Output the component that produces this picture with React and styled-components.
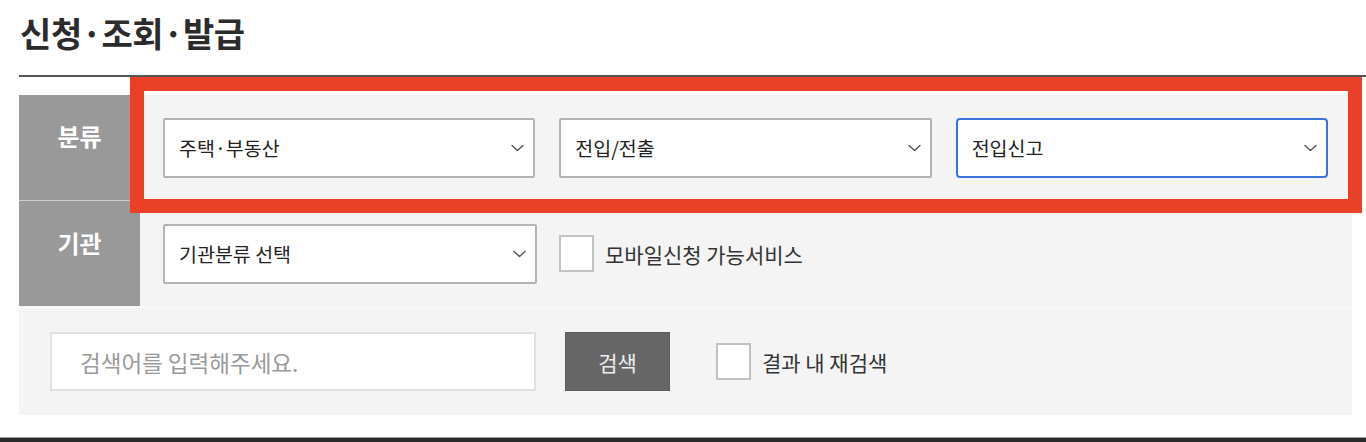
import React from "react";
import styled, { createGlobalStyle } from "styled-components";

const Global = createGlobalStyle`
  html, body { margin: 0; padding: 0; background: #fff; }
  body { font-family: "Noto Sans CJK KR", "Noto Sans", sans-serif; color: #333; }
  * { box-sizing: border-box; }
`;

const Page = styled.div`
  position: relative;
  width: 1366px;
  height: 442px;
  overflow: hidden;
`;

const Section = styled.section`
  padding-left: 19px;
`;

const Title = styled.h2`
  margin: 0;
  padding: 13px 0 0 1px;
  height: 75px;
  font-size: 34px;
  line-height: 40px;
  font-weight: 700;
  color: #2b2b2b;
  letter-spacing: -0.4px;
`;

const Divider = styled.div`
  height: 2px;
  background: #555;
`;

const Panel = styled.div`
  margin: 18px 14px 0 0;
  background: #f4f4f4;
  display: flex;
  flex-direction: column;
`;

const Row = styled.div`
  display: flex;
  height: ${(p) => p.$h}px;
  border-bottom: 1px solid ${(p) => p.$line || "transparent"};
`;

const Label = styled.div`
  width: 121px;
  flex: none;
  background: #999;
  color: #fff;
  font-size: 24px;
  font-weight: 700;
  line-height: 28px;
  text-align: center;
  padding-top: ${(p) => p.$pt}px;
  border-bottom: ${(p) => (p.$sep ? "1px solid #cfcfcf" : "none")};
  margin-bottom: ${(p) => (p.$sep ? "-1px" : "0")};
`;

const Cell = styled.div`
  flex: 1;
  display: flex;
  align-items: center;
  gap: ${(p) => p.$gap || 24}px;
  padding: 0 24px 0 23px;
`;

const SelectBox = styled.div`
  flex: ${(p) => (p.$fixed ? "none" : "1")};
  width: ${(p) => (p.$fixed ? "374px" : "auto")};
  height: 60px;
  background: #fff;
  border: 2px solid ${(p) => (p.$focus ? "#3a74dc" : "#b3b3b3")};
  border-radius: ${(p) => (p.$focus ? "4px" : "2px")};
  display: flex;
  align-items: center;
  justify-content: space-between;
  padding: 0 9px 0 14px;
  font-size: 19.5px;
  color: #222;
`;

const Chevron = () => (
  <svg width="13" height="8" viewBox="0 0 13 8" fill="none">
    <path d="M1 1.5 L6.5 6.5 L12 1.5" stroke="#555" strokeWidth="1.4" strokeLinecap="round" strokeLinejoin="round" />
  </svg>
);

const CheckWrap = styled.label`
  display: flex;
  align-items: center;
  gap: 11px;
  font-size: 21px;
  color: #333;
  margin-left: ${(p) => p.$ml || 0}px;
`;

const Box = styled.span`
  width: 35px;
  height: 37px;
  background: #fff;
  border: 2px solid #c2c2c2;
  display: inline-block;
`;

const SearchRow = styled.div`
  display: flex;
  align-items: center;
  height: 108px;
  padding: 0 0 0 31px;
  border-top: 1px solid #fbfbfb;
`;

const SearchInput = styled.input`
  width: 486px;
  height: 59px;
  border: 2px solid #e0e0e0;
  background: #fff;
  padding: 0 28px;
  font-family: inherit;
  font-size: 22.5px;
  color: #333;
  outline: none;
  &::placeholder { color: #999; }
`;

const SearchButton = styled.button`
  width: 105px;
  height: 59px;
  margin-left: 29px;
  background: #666;
  border: 1px solid #5c5c5c;
  color: #eee;
  font-family: inherit;
  font-size: 21px;
  padding: 0;
`;

const BottomLine = styled.div`
  position: absolute;
  left: 0;
  right: 0;
  bottom: 0;
  height: 5px;
  background: #2a2a2a;
  border-top: 1px solid #999;
`;

const Highlight = styled.div`
  position: absolute;
  left: 130px;
  top: 77px;
  width: 1232px;
  height: 136px;
  border: 14px solid #ea4027;
  pointer-events: none;
`;

export default function App() {
  return (
    <Page>
      <Global />
      <Section>
        <Title>신청·조회·발급</Title>
        <Divider />
        <Panel>
          <Row $h={106} $line="#e6e6e6">
            <Label $pt={27} $sep>분류</Label>
            <Cell>
              <SelectBox>주택·부동산<Chevron /></SelectBox>
              <SelectBox>전입/전출<Chevron /></SelectBox>
              <SelectBox $focus>전입신고<Chevron /></SelectBox>
            </Cell>
          </Row>
          <Row $h={106}>
            <Label $pt={28}>기관</Label>
            <Cell $gap={22}>
              <SelectBox $fixed>기관분류 선택<Chevron /></SelectBox>
              <CheckWrap>
                <Box />
                모바일신청 가능서비스
              </CheckWrap>
            </Cell>
          </Row>
          <SearchRow>
            <SearchInput placeholder="검색어를 입력해주세요." />
            <SearchButton>검색</SearchButton>
            <CheckWrap $ml={46}>
              <Box />
              결과 내 재검색
            </CheckWrap>
          </SearchRow>
        </Panel>
      </Section>
      <Highlight />
      <BottomLine />
    </Page>
  );
}
